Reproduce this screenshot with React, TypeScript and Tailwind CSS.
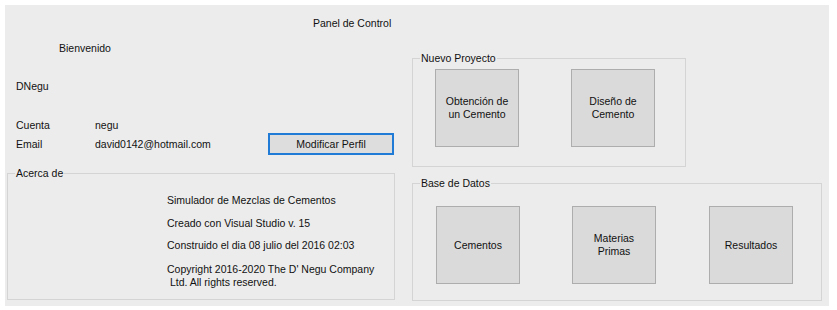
import React from "react";

// Botón grande cuadrado de los grupos
function BigButton({ lines }: { lines: string[] }) {
  return (
    <div className="w-[84px] h-[78px] shrink-0 flex flex-col items-center justify-center bg-[#dadada] border border-[#adadad] text-center leading-[13px]">
      {lines.map((l) => (
        <span key={l}>{l}</span>
      ))}
    </div>
  );
}

function GroupBox({
  title,
  className,
  children,
}: {
  title: string;
  className: string;
  children: React.ReactNode;
}) {
  return (
    <div className={"relative border border-[#d4d4d4] " + className}>
      <span className="absolute left-[7px] top-[-7px] px-[1px] bg-[#ececec] leading-[13px]">
        {title}
      </span>
      {children}
    </div>
  );
}

export default function App() {
  return (
    <div className="w-[837px] h-[310px] bg-white pt-[5px] pl-[5px] font-['Liberation_Sans',Arial,sans-serif] text-[10.5px] text-[#111]">
      <div className="w-[824px] h-[301px] bg-[#ececec] flex flex-col">
        {/* Titulo */}
        <div className="mt-[12px] pl-[308px] leading-[13px]">Panel de Control</div>

        <div className="flex">
          {/* Columna izquierda */}
          <div className="w-[407px] flex flex-col">
            <div className="mt-[12px] pl-[54px] leading-[13px]">Bienvenido</div>
            <div className="mt-[25px] pl-[11px] leading-[13px]">DNegu</div>
            <div className="mt-[26px] pl-[11px] flex leading-[13px]">
              <span className="w-[79px]">Cuenta</span>
              <span>negu</span>
            </div>
            <div className="mt-[1px] pl-[11px] flex items-center h-[22px] leading-[13px]">
              <span className="w-[79px]">Email</span>
              <span className="w-[173px]">david0142@hotmail.com</span>
              <div className="w-[126px] h-[22px] flex items-center justify-center bg-[#dddddd] border-2 border-[#1f7bd5]">
                Modificar Perfil
              </div>
            </div>

            <GroupBox title="Acerca de" className="mt-[18px] ml-[2px] w-[388px] h-[127px]">
              <div className="pl-[159px] flex flex-col leading-[13px]">
                <span className="mt-[20px]">Simulador de Mezclas de Cementos</span>
                <span className="mt-[10px]">Creado con Visual Studio v. 15</span>
                <span className="mt-[9px]">Construido el dia 08 julio del 2016 02:03</span>
                <span className="mt-[11px]">Copyright 2016-2020 The D' Negu Company</span>
                <span className="whitespace-pre"> Ltd. All rights reserved.</span>
              </div>
            </GroupBox>
          </div>

          {/* Columna derecha */}
          <div className="flex flex-col">
            <GroupBox title="Nuevo Proyecto" className="mt-[28px] w-[274px] h-[109px]">
              <div className="mt-[10px] pl-[22px] flex gap-[52px]">
                <BigButton lines={["Obtención de", "un Cemento"]} />
                <BigButton lines={["Diseño de", "Cemento"]} />
              </div>
            </GroupBox>

            <GroupBox title="Base de Datos" className="mt-[16px] w-[410px] h-[118px]">
              <div className="mt-[22px] pl-[23px] flex gap-[52px]">
                <BigButton lines={["Cementos"]} />
                <BigButton lines={["Materias", "Primas"]} />
                <div className="ml-[1px]">
                  <BigButton lines={["Resultados"]} />
                </div>
              </div>
            </GroupBox>
          </div>
        </div>
      </div>
    </div>
  );
}
